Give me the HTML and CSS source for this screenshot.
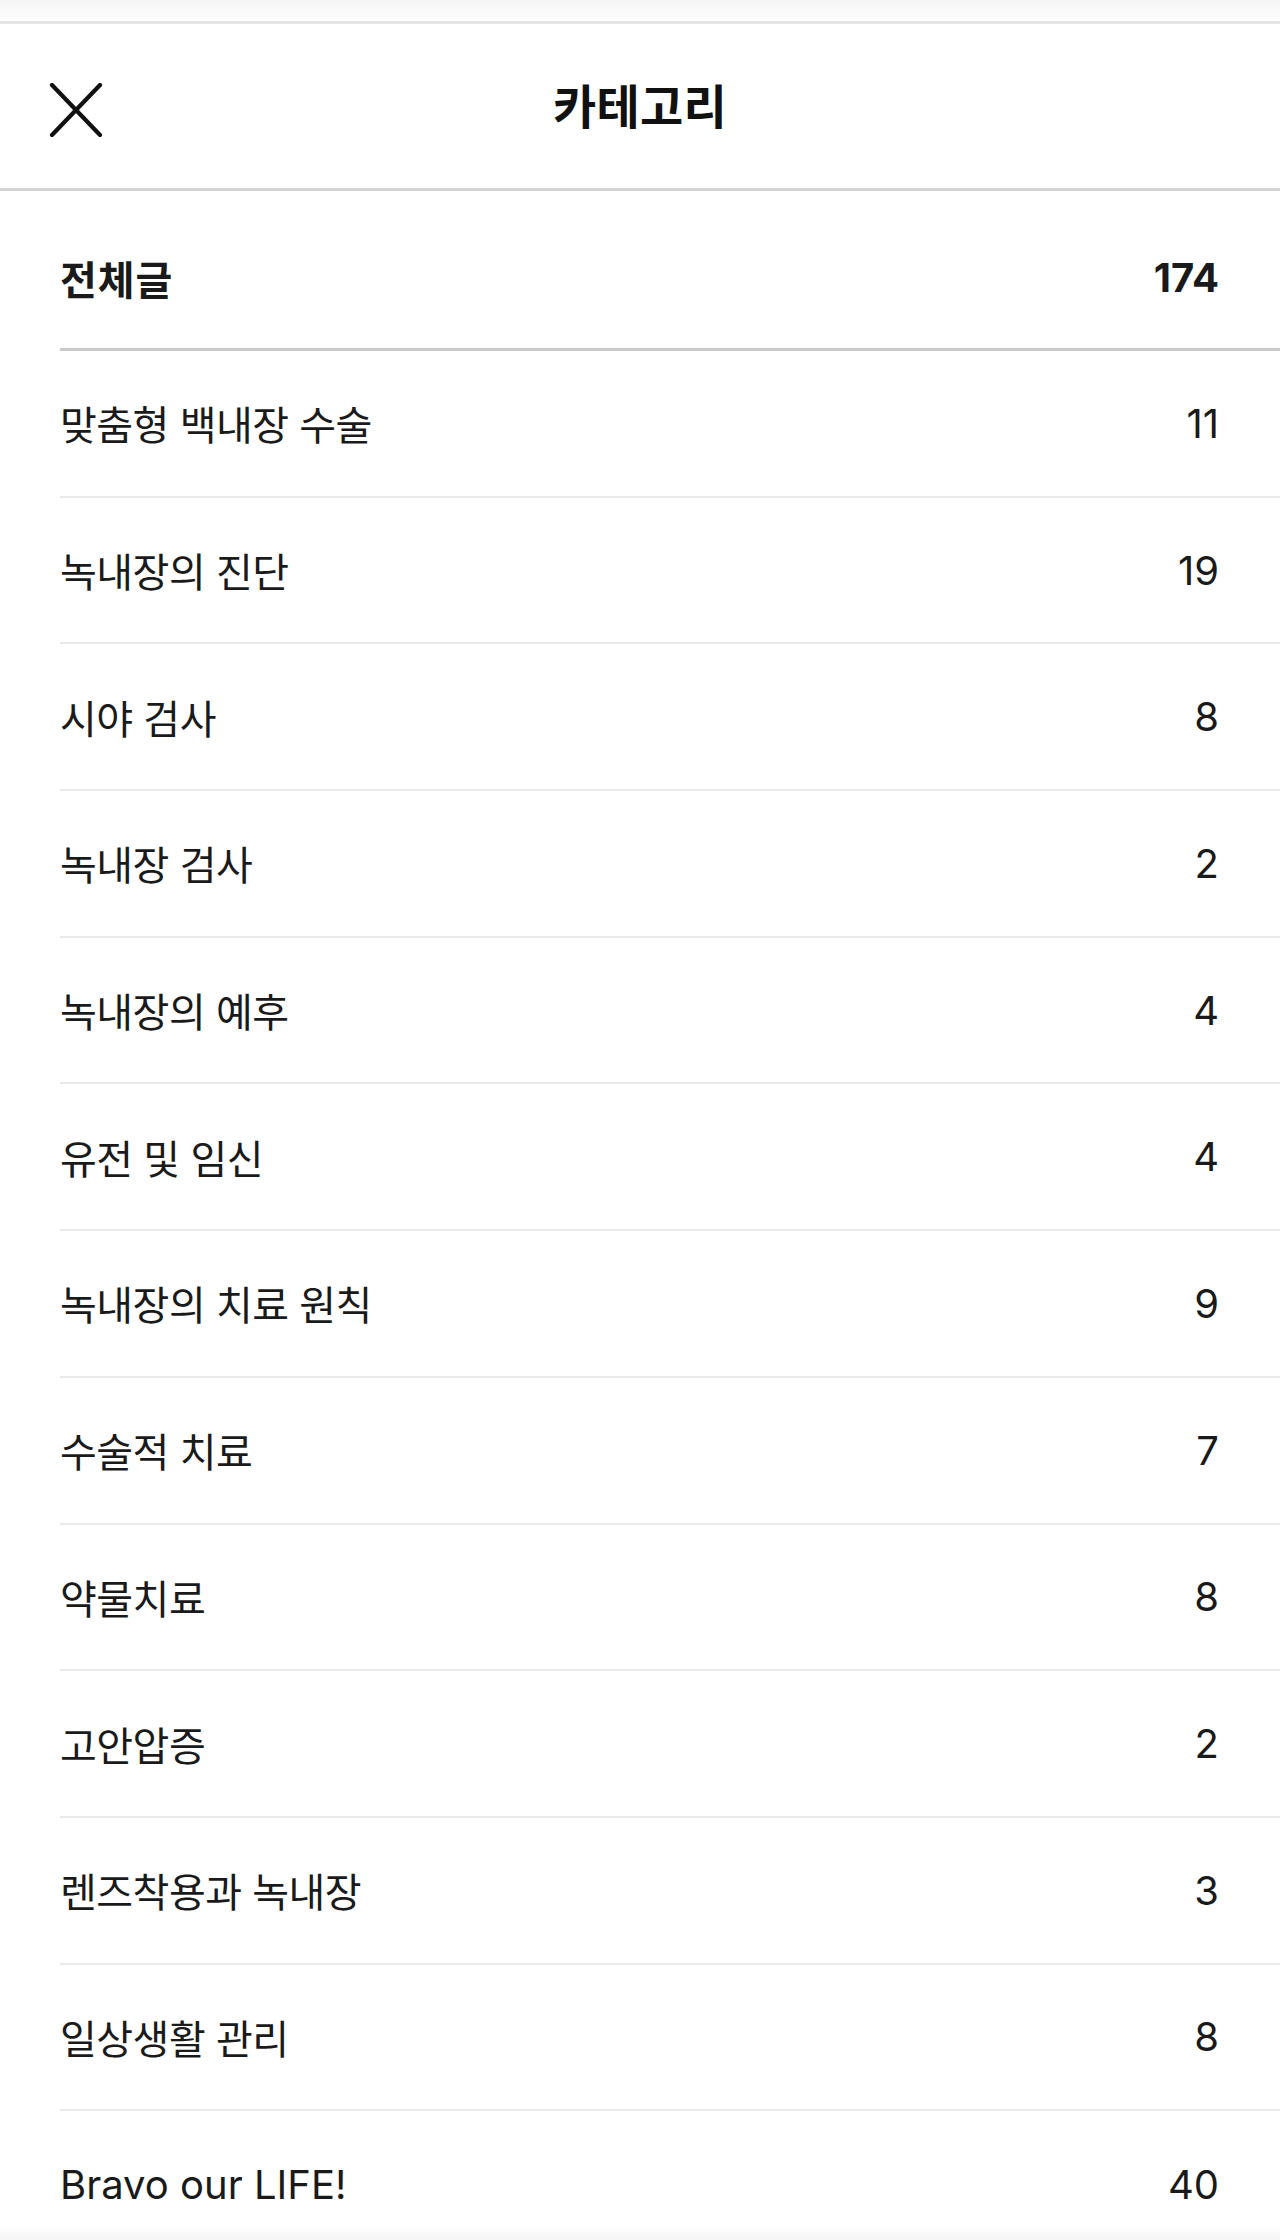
FILE: index.html
```html
<!DOCTYPE html>
<html lang="ko">
<head>
    <meta charset="UTF-8">
    <meta name="viewport" content="width=device-width, initial-scale=1.0">
    <title>카테고리</title>
    <link rel="stylesheet" href="styles.css">
</head>
<body>

    <div class="top-shade"></div>

    <div class="header">
        <button class="close-btn" aria-label="닫기">
            <svg width="56" height="54" viewBox="0 0 56 54">
                <path d="M4 2 L52 52 M52 2 L4 52" stroke="#111" stroke-width="4.2" stroke-linecap="round" fill="none"/>
            </svg>
        </button>
        <h1>카테고리</h1>
    </div>

    <div class="category-list">
        <div class="row total">
            <span class="name">전체글</span>
            <span class="count">174</span>
        </div>
        <div class="row">
            <span class="name">맞춤형 백내장 수술</span>
            <span class="count">11</span>
        </div>
        <div class="row">
            <span class="name">녹내장의 진단</span>
            <span class="count">19</span>
        </div>
        <div class="row">
            <span class="name">시야 검사</span>
            <span class="count">8</span>
        </div>
        <div class="row">
            <span class="name">녹내장 검사</span>
            <span class="count">2</span>
        </div>
        <div class="row">
            <span class="name">녹내장의 예후</span>
            <span class="count">4</span>
        </div>
        <div class="row">
            <span class="name">유전 및 임신</span>
            <span class="count">4</span>
        </div>
        <div class="row">
            <span class="name">녹내장의 치료 원칙</span>
            <span class="count">9</span>
        </div>
        <div class="row">
            <span class="name">수술적 치료</span>
            <span class="count">7</span>
        </div>
        <div class="row">
            <span class="name">약물치료</span>
            <span class="count">8</span>
        </div>
        <div class="row">
            <span class="name">고안압증</span>
            <span class="count">2</span>
        </div>
        <div class="row">
            <span class="name">렌즈착용과 녹내장</span>
            <span class="count">3</span>
        </div>
        <div class="row">
            <span class="name">일상생활 관리</span>
            <span class="count">8</span>
        </div>
        <div class="row last">
            <span class="name latin">Bravo our LIFE!</span>
            <span class="count">40</span>
        </div>
    </div>

    <div class="bottom-shade"></div>

</body>
</html>
```

FILE: styles.css
```css
body {
    font-family: "Inter", "Noto Sans CJK KR", sans-serif;
    background-color: white;
    color: #1a1a1a;
    margin: 0;
    padding: 0;
    height: 2240px;
    overflow: hidden;
    position: relative;
}
.top-shade {
    height: 21px;
    background: linear-gradient(to bottom, #f6f6f6, #fdfdfd);
    border-bottom: 3px solid #e4e4e4;
}
.header {
    display: flex;
    align-items: center;
    justify-content: center;
    position: relative;
    height: 164px;
    border-bottom: 3px solid #d3d3d3;
}
.header h1 {
    margin: 0 0 6px;
    font-size: 47px;
    font-weight: bold;
    letter-spacing: 0.3px;
    color: #111;
}
.close-btn {
    position: absolute;
    left: 48px;
    top: 59px;
    padding: 0;
    border: none;
    background: none;
    cursor: pointer;
}
.close-btn svg {
    display: block;
}
.category-list {
    margin-left: 60px;
}
.row {
    display: flex;
    align-items: center;
    justify-content: space-between;
    box-sizing: border-box;
    height: 146.7px;
    padding-right: 61px;
    border-bottom: 2px solid #e9e9e9;
    font-size: 40px;
}
.row .name {
    letter-spacing: -0.5px;
}
.row .name.latin {
    letter-spacing: 0;
}
.row.total {
    height: 160px;
    padding-top: 16px;
    border-bottom: 3px solid #c9c9c9;
    font-weight: bold;
}
.row.total .name {
    letter-spacing: 1px;
}
.row.last {
    border-bottom: none;
}
.bottom-shade {
    position: absolute;
    left: 0;
    right: 0;
    bottom: 0;
    height: 14px;
    background: linear-gradient(to bottom, #ffffff, #f4f4f4);
}
```
